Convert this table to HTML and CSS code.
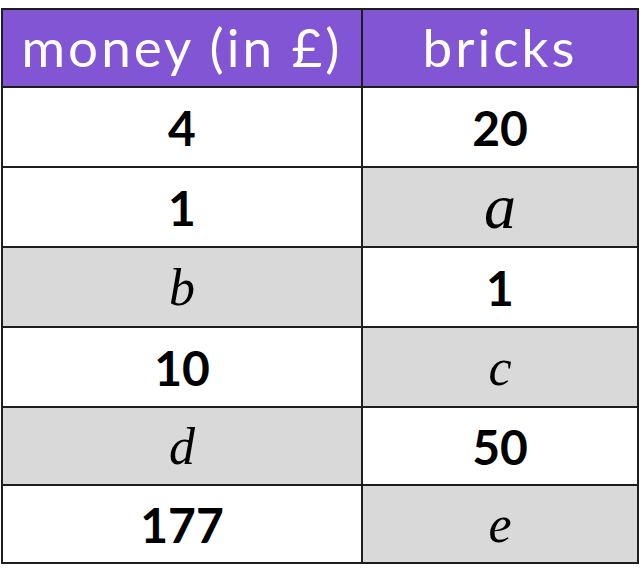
FILE: index.html
```html
<!DOCTYPE html>
<html>
<head>
<meta charset="utf-8">
<link rel="stylesheet" href="styles.css">
</head>
<body>
<div class="wrap">
  <div class="table">
    <div class="cell head">money (in £)</div>
    <div class="cell head">bricks</div>
    <div class="cell num">4</div>
    <div class="cell num">20</div>
    <div class="cell num">1</div>
    <div class="cell var big grey">a</div>
    <div class="cell var grey">b</div>
    <div class="cell num">1</div>
    <div class="cell num">10</div>
    <div class="cell var grey">c</div>
    <div class="cell var grey">d</div>
    <div class="cell num">50</div>
    <div class="cell num">177</div>
    <div class="cell var grey">e</div>
  </div>
</div>
</body>
</html>
```
FILE: styles.css
```css
html, body {
  margin: 0;
  background: #ffffff;
}
.wrap {
  padding: 8px 0 0 1px;
}
.table {
  display: grid;
  grid-template-columns: 358px 274px;
  grid-template-rows: 76px 78px 78px 78px 78px 76px 76px;
  gap: 2px;
  padding: 2px;
  background: #1e1e1e;
  width: max-content;
}
.cell {
  display: flex;
  align-items: center;
  justify-content: center;
  background: #ffffff;
  color: #000000;
}
.head {
  background: #8155d4;
  color: #ffffff;
  font-family: Lato, "Liberation Sans", sans-serif;
  font-size: 53px;
  font-weight: 400;
  letter-spacing: 3px;
  padding-bottom: 4px;
}
.num {
  font-family: Lato, "Liberation Sans", sans-serif;
  font-size: 48px;
  font-weight: 700;
}
.var {
  font-family: "Liberation Serif", serif;
  font-style: italic;
  font-size: 52px;
}
.var.big {
  font-size: 64px;
}
.grey {
  background: #d9d9d9;
}
```
